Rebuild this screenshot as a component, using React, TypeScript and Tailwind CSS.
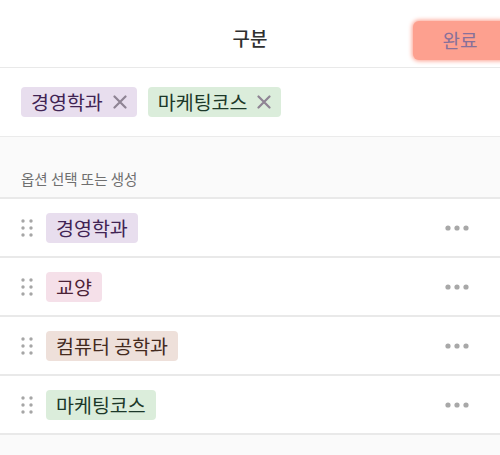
import React from 'react';

type Opt = { label: string; bg: string; fg: string };

const options: Opt[] = [
  { label: '경영학과', bg: 'bg-[#e8deee]', fg: 'text-[#412454]' },
  { label: '교양', bg: 'bg-[#f5e0e9]', fg: 'text-[#4c2337]' },
  { label: '컴퓨터 공학과', bg: 'bg-[#eee0da]', fg: 'text-[#442a1e]' },
  { label: '마케팅코스', bg: 'bg-[#dbeddb]', fg: 'text-[#1c3829]' },
];

const selected = [options[0], options[3]];

const DragHandle = () => (
  <svg width="12" height="18" viewBox="0 0 12 18" className="shrink-0">
    {[2, 9, 16].map((y) =>
      [2, 10].map((x) => <circle key={`${x}-${y}`} cx={x} cy={y} r="1.7" fill="#a6a6a6" />)
    )}
  </svg>
);

const MoreDots = () => (
  <svg width="26" height="6" viewBox="0 0 26 6">
    {[3, 12, 21].map((x) => (
      <circle key={x} cx={x} cy="3" r="2.6" fill="#a8a8a8" />
    ))}
  </svg>
);

const App: React.FC = () => {
  return (
    <div className="w-[500px] h-[455px] overflow-hidden bg-[#fafafa] font-['Noto_Sans_CJK_KR','Noto_Sans',sans-serif]">
      {/* Header */}
      <div className="relative h-[68px] bg-white border-b border-[#e9e9e9] flex items-center justify-center">
        <h1 className="text-[19px] font-medium text-[#2f2f2f] mt-[10px]">구분</h1>
        <button className="absolute right-[-8px] top-[21px] h-[39px] w-[95px] rounded-[6px] bg-[#fda08f] shadow-[0_0_4px_1px_#fda08f] text-[19px] text-[#88709a] pr-[1px]">
          완료
        </button>
      </div>

      {/* Selected */}
      <div className="h-[69px] bg-white border-b border-[#ebebeb] flex items-center gap-[11px] px-[21px]">
        {selected.map((o) => (
          <span
            key={o.label}
            className={`h-[30px] flex items-center gap-[10px] pl-[10px] pr-[10px] rounded-[4px] text-[19.5px] ${o.bg} ${o.fg}`}
          >
            {o.label}
            <svg width="14" height="14" viewBox="0 0 14 14">
              <path d="M1.5 1.5 L12.5 12.5 M12.5 1.5 L1.5 12.5" stroke="#8f8494" strokeWidth="2.2" strokeLinecap="round" />
            </svg>
          </span>
        ))}
      </div>

      {/* Section label */}
      <div className="h-[60px] flex items-end px-[21px] pb-[7px]">
        <span className="text-[14.5px] text-[#6f6f6f]">옵션 선택 또는 생성</span>
      </div>

      {/* Options */}
      <div className="border-t-2 border-[#e9e9e9]">
        {options.map((o) => (
          <div key={o.label} className="h-[59px] bg-white border-b-2 border-[#e9e9e9] flex items-center pl-[21px] pr-[29px]">
            <DragHandle />
            <span className={`ml-[13px] h-[30px] flex items-center px-[10px] rounded-[4px] text-[19.5px] ${o.bg} ${o.fg}`}>
              {o.label}
            </span>
            <div className="ml-auto">
              <MoreDots />
            </div>
          </div>
        ))}
      </div>
    </div>
  );
};

export default App;
